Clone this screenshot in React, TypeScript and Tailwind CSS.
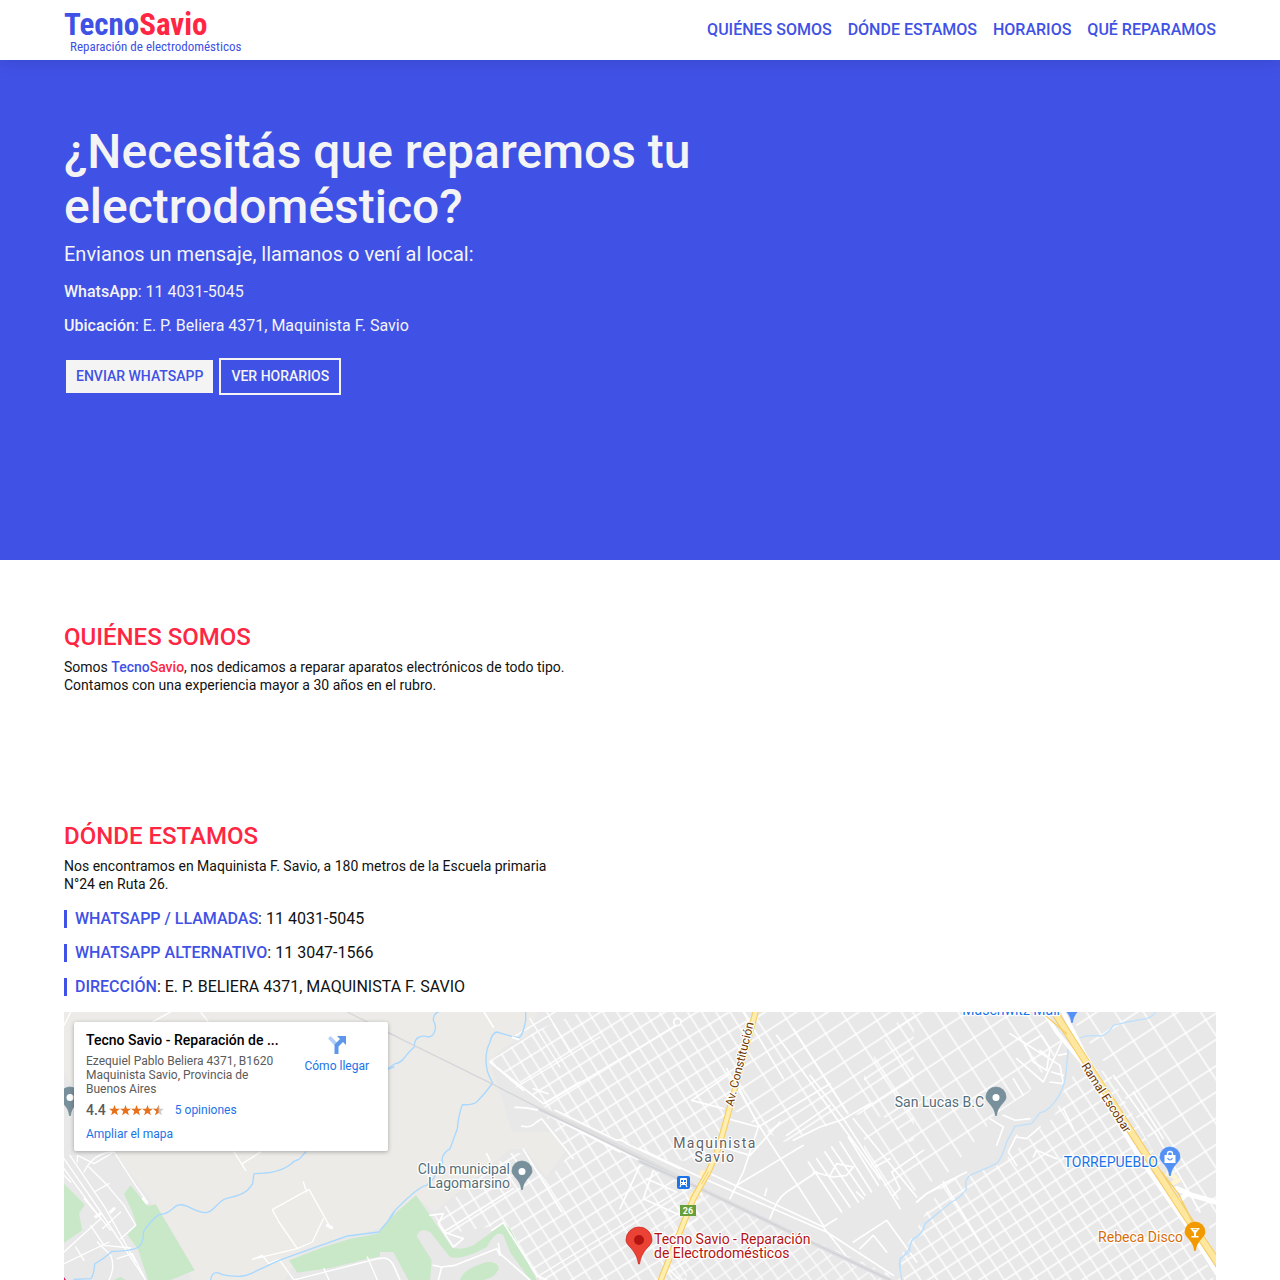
import React from "react";

const NAV = [
  { label: "QUIÉNES SOMOS", href: "#quienes-somos" },
  { label: "DÓNDE ESTAMOS", href: "#donde-estamos" },
  { label: "HORARIOS", href: "#horarios" },
  { label: "QUÉ REPARAMOS", href: "#que-reparamos" },
];

const CONTACT = [
  { label: "WHATSAPP / LLAMADAS", value: "11 4031-5045" },
  { label: "WHATSAPP ALTERNATIVO", value: "11 3047-1566" },
  { label: "DIRECCIÓN", value: "E. P. BELIERA 4371, MAQUINISTA F. SAVIO" },
];

const PIN = "M-1 0C-1.500 -6 -4 -9 -7 -12.500C-9 -15 -10.500 -16.500 -10.500 -19A10.500 10.500 0 0 1 10.500 -19C10.500 -16.500 9 -15 7 -12.500C4 -9 1.500 -6 1 0Z";

function Pin({ x, y, fill, children }: { x: number; y: number; fill: string; children?: React.ReactNode }) {
  return (
    <g transform={`translate(${x} ${y})`}>
      <path d={PIN} fill={fill} stroke="#fff" strokeOpacity=".4" strokeWidth=".5" />
      {children ?? <circle cx="0" cy="-18.5" r="3.5" fill="#fff" />}
    </g>
  );
}

function Grid({ id, w, h, angle, x = 0, y = 0, sw = 1.4 }: { id: string; w: number; h: number; angle: number; x?: number; y?: number; sw?: number }) {
  return (
    <pattern id={id} width={w} height={h * 2} patternUnits="userSpaceOnUse" patternTransform={`translate(${x} ${y}) rotate(${angle})`}>
      <path d={`M0 1H${w}M0 ${h + 1}H${w}M1 0V${h * 2}`} stroke="#fff" strokeWidth={sw} fill="none" />
    </pattern>
  );
}

function MapDrawing() {
  return (
    <svg viewBox="0 0 1152 268" preserveAspectRatio="xMinYMin slice" className="block h-full w-full" role="img" aria-label="Mapa de Maquinista Savio">
      <defs>
        <Grid id="gTop" w={12} h={17} angle={-32} x={426} y={48} />
        <Grid id="gMid" w={14} h={15} angle={-32} x={381} y={222} />
        <Grid id="gEast" w={25} h={17} angle={-33} x={700} y={20} />
        <Grid id="gFar" w={19} h={25} angle={-33} x={850} y={4} />
        <Grid id="gSouth" w={14} h={14} angle={-33} x={905} y={190} />
        <Grid id="gHwy" w={24} h={22} angle={-33} x={1060} y={60} />
        <Grid id="gRail" w={13} h={12} angle={-36} x={600} y={200} sw={1.2} />
      </defs>
      <rect width="1152" height="268" fill="#e8e8e8" />
      <path d="M0 0H474L463 24L443 33L425 49L437 83L448 120H490L501 140L482 165L461 137H446L370 200L352 184L316 216L240 238L220 268H82L0 60Z" fill="#ecebe8" />
      <path d="M0 60L18 90L50 140L88 190L128 268H0Z" fill="#e8e8e8" />

      <path d="M425 49L474 18L540 -10H690L655 150L600 148L480 95L455 70Z" fill="url(#gTop)" />
      <path d="M482 104L600 160L640 175L622 268H474L442 212L381 222L370 203L446 141H460L483 170L505 143Z" fill="url(#gMid)" />
      <path d="M690 0H850V135L820 105L785 102L755 118L720 130L690 112L665 95L663 85Z" fill="url(#gEast)" />
      <path d="M600 194L640 179L780 242L840 268H600Z" fill="url(#gRail)" />
      <path d="M840 0H980L1000 30L965 80L935 100L885 160L830 190L800 140V60Z" fill="url(#gFar)" />
      <path d="M880 170L935 153L990 105L1004 68L1020 55L1045 60L1112 180L1150 268H840L836 245Z" fill="url(#gSouth)" />
      <path d="M1002 0H1152V225L1110 170L1040 50Z" fill="url(#gHwy)" />

      {/* western half */}
      <g transform="scale(.33333)" fill="none" strokeLinejoin="round" strokeLinecap="round">
        <path d="M180 545L200 520L250 582L275 577L392 775L320 804H252L222 712L190 668L218 640L205 600ZM0 515L25 540L62 578L45 605L55 655L0 692Z" fill="#c8e8c8" />
        <path d="M150 804L170 795L185 804Z" fill="#c8e8c8" />
        <path d="M675 745L780 705L860 680L940 665L990 620V730L920 738L800 768L700 782Z" fill="#c8e8c8" />
        <g stroke="#fff" strokeWidth="4">
          <path d="M0 440L110 600L245 804M18 430L125 590L215 750M0 470L80 580L140 655M60 480Q90 420 150 420L215 520L250 570M75 465L130 520L180 580L215 640L170 680M60 560L110 620L60 665L0 720M90 540L135 515M150 420L90 455L40 430V450M35 705L60 745M0 755L135 690M80 640L120 700L200 708M100 690L140 730Q155 765 135 804M160 740L205 725L245 804M0 40L20 0M265 30L320 0M410 0L432 28M0 490L20 510M115 650L170 600" />
          <path d="M510 420L545 475M535 455L590 420M625 593L735 532L800 648M625 593L645 630L700 710L565 742M718 510L728 540M700 710L745 690L778 620M565 742L595 730L615 755L645 742L690 804M690 804L960 735L990 750M910 735L940 804M780 770L795 804" />
        </g>
        <path d="M790 640L803 647M248 572L238 560M95 614L108 606M140 600L150 590" stroke="#fff" strokeWidth="9" />
        <path d="M725 420L705 442Q690 445 680 457Q645 485 570 485L566 515C545 550 520 550 480 562C455 575 450 600 425 602C390 602 365 570 340 580C320 590 320 605 285 608Q260 625 238 660Q240 700 215 710Q180 720 145 718Q120 740 92 756Q90 790 80 800L30 802M440 804Q445 770 475 788Q530 800 560 785L645 745L770 700L850 672L945 660Q970 650 990 600M970 172L990 165" stroke="#a9d8ff" strokeWidth="4" />
        <path d="M850 0L1000 75" stroke="#d6d7da" strokeWidth="4" />
      </g>

      {/* centre */}
      <g transform="translate(316 0) scale(.33333)" fill="none" strokeLinejoin="round" strokeLinecap="round">
        <path d="M0 655L50 600L108 550L150 610L170 640L215 705Q240 718 280 700L370 635L390 650L470 804H0Z" fill="#c8e8c8" />
        <path d="M0 720L40 720L85 804H0ZM110 672Q120 645 150 660L210 735Q250 745 320 705Q350 650 370 670L390 720L450 804H150L155 745Z" fill="#e8e8e8" />
        <path d="M240 804Q250 770 320 750Q360 748 355 775Q340 800 310 804Z" fill="#c8e8c8" />
        <g stroke="#fff" strokeWidth="5">
          <path d="M150 610L190 605L175 635L220 705L250 680L190 660L400 530M335 655L370 632L470 790L500 804M430 412L545 600M490 275L330 150L430 235M490 275L600 210M460 230L505 245M0 740Q30 730 45 770L60 804M160 760L185 765L225 760L350 710L360 730M185 765L175 804M355 695L360 725L450 804M405 286Q440 285 475 295L720 420M425 342Q450 350 470 330L485 320L580 440M485 300L900 505M525 295L710 385Q725 380 740 395L900 470M312 0L340 45M320 425L330 445M780 460L720 590M820 475L790 560L900 610M800 500L890 540" />
          <path d="M400 75L600 -45M410 225L660 75M495 275L900 35M450 20L540 165M500 0L570 120M470 795L890 540" strokeWidth="4" />
        </g>
        <g stroke="#a9d8ff" strokeWidth="4">
          <path d="M175 0Q160 5 160 25C175 50 160 75 145 75Q130 70 118 75Q103 80 103 105Q85 120 75 135Q60 155 45 155L22 172M437 0V25C432 50 430 65 418 77L395 73L350 60Q335 65 330 90Q310 130 323 180Q328 195 338 213Q315 245 290 270Q275 280 247 278Q235 310 232 350L210 410Q180 430 188 450L160 500L140 520Q120 520 50 590Q35 605 22 630L0 655" />
        </g>
        <path d="M0 50L335 215L480 290" stroke="#d4d6da" strokeWidth="4" />
        <path d="M480 292L620 355L900 498" stroke="#dfdfe1" strokeWidth="14" />
        <path d="M480 292L900 498" stroke="#cfd1d6" strokeWidth="4" />
        <path d="M398 76L416 82" stroke="#fff" strokeWidth="6" />
      </g>

      {/* town centre */}
      <g transform="translate(576 0) scale(.33333)" fill="none" strokeLinejoin="round" strokeLinecap="round">
        <path d="M0 410L180 495L330 560L560 660L760 790M200 480L550 645L640 760M270 560L310 480L355 345L270 322M355 345L400 318L570 215M155 265L250 290M155 265L270 185M355 340L290 215M260 170L360 345L550 640M290 520L490 400M390 620Q410 560 440 540L530 480M375 550L380 530M550 645L590 620M510 190L610 320L720 490L780 590M460 385L540 345L610 322L690 275M440 370L570 280M410 70L720 500M640 320L830 555M460 50L620 300M505 450L605 600M530 440L630 585M555 420L655 570M575 405L675 550M600 390L695 540M625 375L715 520M520 480L580 495L620 490L640 465L590 455L570 490M650 540L670 560M760 550L780 530L755 480L850 415M705 465L750 440M830 570L860 545L900 525M640 690L740 625L830 750M660 710L700 670L740 720M230 400L330 430L420 330M75 760L120 804M310 0L430 200" stroke="#fff" strokeWidth="5" />
        <path d="M900 598L855 635Q850 665 820 680Q805 700 810 720Q780 735 778 755L785 804" stroke="#bfe0fb" strokeWidth="4" />
        <path d="M0 448L170 525L450 660L750 804" stroke="#dfdfe1" strokeWidth="13" />
        <path d="M0 448L170 525L450 660L750 804" stroke="#cfd1d6" strokeWidth="4" />
        <circle cx="112" cy="30" r="11" fill="#e8e8e8" stroke="#fff" strokeWidth="5" />
        <path d="M180 483L205 490M150 548L172 560" stroke="#fff1c4" strokeWidth="20" strokeLinecap="butt" />
        <path d="M348 -5L270 285L235 410L205 480L160 560L60 810" stroke="#f6cf65" strokeWidth="19" />
        <path d="M348 -5L270 285L235 410L205 480L160 560L60 810" stroke="#ffeeb0" strokeWidth="12" />
        <path d="M205 480L185 516" stroke="#f6cf65" strokeWidth="3" />
      </g>

      {/* eastern half */}
      <g transform="translate(836 0) scale(.33333)" fill="none" strokeLinejoin="round" strokeLinecap="round">
        <path d="M330 65L480 160L490 215L450 210M375 100L425 70L450 110L440 175L400 150ZM485 90L430 210L350 140M420 115L445 135M475 130L500 125M455 180L490 190M270 320L310 345L290 400M310 310L345 325L390 320M350 370L325 420L350 460M350 375L380 380L420 345M400 435L410 415L470 440M130 510L240 690M50 570L80 545L130 515L200 480M340 200L370 250M490 290L520 350M640 190L770 370L900 600M700 240L790 380" stroke="#fff" strokeWidth="5" />
        <path d="M505 110L497 190Q490 240 460 275Q440 300 420 302L395 335L345 343L320 390Q305 440 290 455L210 490Q190 510 200 530Q180 560 155 570L75 635Q70 670 35 685Q30 720 0 740V770M540 78Q560 68 605 72Q630 60 640 40L680 30L740 20Q760 12 768 0" stroke="#bfe0fb" strokeWidth="4" />
        <path d="M432 0L470 60L545 150L720 440L860 640L960 800" stroke="#fff" strokeWidth="12" />
        <path d="M490 0L555 130L800 530L950 740" stroke="#fff" strokeWidth="13" />
        <path d="M845 560L860 545L960 574M830 530L865 545" stroke="#fff" strokeWidth="15" />
        <path d="M805 485L825 495M820 512L835 505" stroke="#fff5d2" strokeWidth="14" />
        <path d="M900 665L960 758" stroke="#b5dabf" strokeWidth="5" />
        <path d="M460 -5L520 90L665 315L850 600L960 763" stroke="#f3cb62" strokeWidth="23" />
        <path d="M460 -5L520 90L665 315L850 600L960 763" stroke="#ffe79f" strokeWidth="17" />
        <path d="M438 12L500 65M785 480L835 545L880 635" stroke="#f6cf65" strokeWidth="4" />
        <path d="M615 235L665 315" stroke="#f6cf65" strokeWidth="3" />
      </g>

      <Pin x={6} y={104} fill="#78909c" />
      <Pin x={458} y={178} fill="#78909c" />
      <Pin x={932} y={104} fill="#78909c" />
      <Pin x={1008} y={11} fill="#5491f5" />
      <Pin x={1106} y={164} fill="#5491f5">
        <path d="M-5.500 -21H5.500V-13H-5.500Z" fill="#fff" />
        <path d="M-2.500 -20.500V-22A2.500 2.500 0 0 1 2.500 -22V-20.500" stroke="#fff" strokeWidth="1.400" fill="none" />
        <path d="M-2.500 -18Q0 -14 2.500 -18" stroke="#5491f5" strokeWidth="1.200" fill="none" />
      </Pin>
      <Pin x={1131} y={239} fill="#f29900">
        <path d="M-5 -23H5L1 -18V-15H3.500V-13.500H-3.500V-15H-1V-18Z" fill="#fff" />
        <path d="M-2 -21.700H2" stroke="#f29900" strokeWidth=".8" />
      </Pin>
      <g transform="translate(575 252)">
        <path d="M-.5 0C-1.500 -7 -4 -11 -8 -16C-11 -19 -13 -21 -13 -24A13 13 0 0 1 13 -24C13 -21 11 -19 8 -16C4 -11 1.500 -7 .5 0Z" fill="#ea4335" stroke="#c5221f" strokeWidth=".7" />
        <circle cy="-24" r="5" fill="#b31412" />
      </g>
      <path d="M0 265L2 268H0Z" fill="#e91e63" />

      {/* train station */}
      <rect x="613" y="164" width="13" height="13" rx="2" fill="#1a73e8" />
      <rect x="616" y="166" width="7" height="7" rx="1" fill="#fff" />
      <path d="M617 173L616 175M622 173L623 175" stroke="#fff" strokeWidth="1.200" />
      <path d="M617 168H619V170H617ZM620 168H622V170H620ZM617 171H618V172H617ZM621 171H622V172H621Z" fill="#1a73e8" />
      <rect x="616" y="193" width="16" height="11" fill="#689f38" />

      <g className="text-sm" fontFamily="Roboto, sans-serif" stroke="#fff" strokeWidth="2.500" strokeLinejoin="round" paintOrder="stroke">
        <text x="446" y="162" textAnchor="end" fill="#546e7a">Club municipal</text>
        <text x="446" y="176" textAnchor="end" fill="#546e7a">Lagomarsino</text>
        <text x="920" y="95" textAnchor="end" fill="#546e7a">San Lucas B.C</text>
        <text x="996" y="3" textAnchor="end" fill="#1a73e8">Maschwitz Mall</text>
        <text x="1094" y="155" textAnchor="end" fill="#1a73e8">TORREPUEBLO</text>
        <text x="1119" y="230" textAnchor="end" fill="#d56e0c">Rebeca Disco</text>
        <text x="590" y="232" fill="#b31412">Tecno Savio - Reparación</text>
        <text x="590" y="246" fill="#b31412">de Electrodomésticos</text>
        <g textAnchor="middle" fill="#5f6368" className="tracking-widest">
          <text x="651" y="136">Maquinista</text>
          <text x="651" y="150">Savio</text>
        </g>
        <text className="text-xs" transform="translate(669 95) rotate(-76)" fill="#713800">Av. Constitución</text>
        <text className="text-xs" transform="translate(1017 54) rotate(57)" fill="#713800">Ramal Escobar</text>
      </g>
      <text x="624" y="202" textAnchor="middle" fill="#fff" fontFamily="Roboto, sans-serif" fontWeight="700" className="text-[9px]">26</text>
    </svg>
  );
}

const STAR = "M6 0L7.500 4.200H12L8.400 6.900L9.700 11.200L6 8.600L2.300 11.200L3.600 6.900L0 4.200H4.500Z";

function Stars() {
  return (
    <svg viewBox="0 0 60 12" className="h-[11px] w-[55px]" role="img" aria-label="4.4 de 5 estrellas">
      {[0, 1, 2, 3].map((i) => (
        <path key={i} d={STAR} transform={`translate(${i * 12} 0)`} fill="#e7711b" />
      ))}
      <path d={STAR} transform="translate(48 0)" fill="#c9c9c9" />
      <path d="M54 0V8.600L50.300 11.200L51.600 6.900L48 4.200H52.500Z" fill="#e7711b" />
    </svg>
  );
}

function MapCard() {
  return (
    <div className="absolute top-[10px] left-[10px] flex w-[314px] justify-between rounded-xs bg-white pt-[10px] pr-[19px] pb-[9px] pl-3 text-xs leading-[14px] text-[#5b5b5b] shadow-[0_1px_4px_rgba(0,0,0,0.3)]">
      <div className="w-[200px]">
        <div className="truncate text-sm leading-4 font-medium text-black">Tecno Savio - Reparación de ...</div>
        <p className="mt-[6px]">Ezequiel Pablo Beliera 4371, B1620 Maquinista Savio, Provincia de Buenos Aires</p>
        <div className="mt-[6px] flex items-center leading-4">
          <span className="mr-[3px] text-sm leading-4 font-medium">4.4</span>
          <Stars />
          <a href="#opiniones" className="ml-[11px] text-[#1a73e8]">5 opiniones</a>
        </div>
        <a href="#mapa" className="mt-2 block leading-4 text-[#1a73e8]">Ampliar el mapa</a>
      </div>
      <a href="#llegar" className="flex flex-col items-center pt-1 text-[#1a73e8]">
        <svg viewBox="0 0 18 18" className="mb-[5px] h-[18px] w-[18px]">
          <path d="M0 2.500L2.500 0L9 6.500L6.500 9.500Z" fill="#b4d0f8" />
          <path d="M9 0H18V9L15 6L10.500 10.500V18H6.500V8.500L12 3Z" fill="#5e97ea" />
        </svg>
        Cómo llegar
      </a>
    </div>
  );
}

export default function App() {
  return (
    <div className="bg-white font-['Roboto',sans-serif] text-[#111]">
      <header className="relative z-10 flex h-[60px] items-center justify-between bg-white px-16 shadow-[0_0_16px_rgba(0,0,0,0.12)]">
        <a href="#inicio" className="flex flex-col pt-[5px] font-['Roboto_Condensed','Roboto',sans-serif] text-[#4051e5]">
          <span className="text-[31px] leading-7 font-bold">
            Tecno<span className="text-[#ff2643]">Savio</span>
          </span>
          <span className="pl-[6px] text-[13px] leading-4">Reparación de electrodomésticos</span>
        </a>
        <nav className="flex gap-4 font-medium text-[#4051e5]">
          {NAV.map((n) => (
            <a key={n.href} href={n.href}>{n.label}</a>
          ))}
        </nav>
      </header>

      <main>
        <section id="inicio" className="min-h-[500px] bg-[#4051e5] px-16 pt-16 text-[#f4f4f4]">
          <h1 className="max-w-[700px] text-5xl leading-[55px] font-medium">¿Necesitás que reparemos tu electrodoméstico?</h1>
          <p className="mt-2 text-xl leading-6">Envianos un mensaje, llamanos o vení al local:</p>
          <p className="mt-[17px] leading-[18px]"><strong className="font-medium">WhatsApp</strong>: 11 4031-5045</p>
          <p className="mt-4 leading-[18px]"><strong className="font-medium">Ubicación</strong>: E. P. Beliera 4371, Maquinista F. Savio</p>
          <div className="mt-[23px] flex gap-1 text-sm leading-[17px] font-medium">
            <button type="button" className="border-2 border-transparent bg-[#f4f4f4] bg-clip-padding px-[10px] py-2 text-[#4051e5]">ENVIAR WHATSAPP</button>
            <button type="button" className="border-2 border-[#f4f4f4] px-[10px] py-2">VER HORARIOS</button>
          </div>
        </section>

        <section id="quienes-somos" className="px-16 pt-[63px] pb-16">
          <h2 className="text-2xl leading-7 font-medium text-[#ff2643]">QUIÉNES SOMOS</h2>
          <p className="mt-[7px] max-w-[510px] text-sm leading-[18px]">
            Somos <strong className="font-medium text-[#4051e5]">Tecno<span className="text-[#ff2643]">Savio</span></strong>, nos dedicamos a reparar aparatos electrónicos de todo tipo. Contamos con una experiencia mayor a 30 años en el rubro.
          </p>
        </section>

        <section id="donde-estamos" className="px-16 pt-16">
          <h2 className="text-2xl leading-7 font-medium text-[#ff2643]">DÓNDE ESTAMOS</h2>
          <p className="mt-[7px] max-w-[510px] text-sm leading-[18px]">
            Nos encontramos en Maquinista F. Savio, a 180 metros de la Escuela primaria N°24 en Ruta 26.
          </p>
          <ul className="mt-[17px] flex flex-col gap-4">
            {CONTACT.map((c) => (
              <li key={c.label} className="border-l-3 border-[#4051e5] pl-2 leading-[18px]">
                <strong className="font-medium text-[#4051e5]">{c.label}</strong>: {c.value}
              </li>
            ))}
          </ul>
          <div className="relative mt-4 h-[268px] overflow-hidden">
            <MapDrawing />
            <MapCard />
          </div>
        </section>
      </main>
    </div>
  );
}
